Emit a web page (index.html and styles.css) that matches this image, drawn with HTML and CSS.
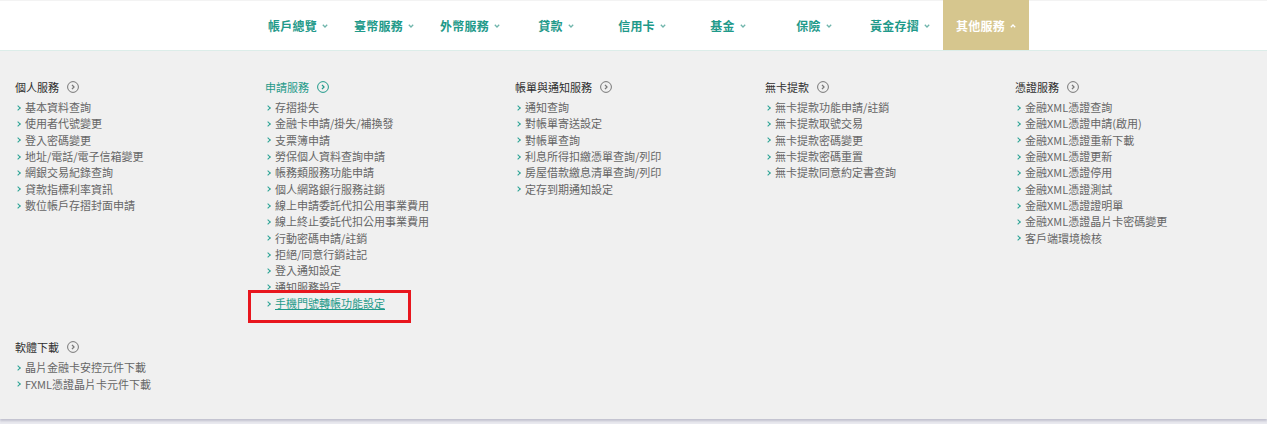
FILE: index.html
```html
<!DOCTYPE html>
<html lang="zh-Hant">
<head>
<meta charset="utf-8">
<title>其他服務</title>
<link rel="stylesheet" href="styles.css">
</head>
<body>
<header class="nav">
  <ul class="nav-list">
    <li class="nav-item">帳戶總覽<svg class="caret" viewBox="0 0 6 4"><polyline points="0.8,0.8 3,3 5.2,0.8"/></svg></li>
    <li class="nav-item">臺幣服務<svg class="caret" viewBox="0 0 6 4"><polyline points="0.8,0.8 3,3 5.2,0.8"/></svg></li>
    <li class="nav-item">外幣服務<svg class="caret" viewBox="0 0 6 4"><polyline points="0.8,0.8 3,3 5.2,0.8"/></svg></li>
    <li class="nav-item">貸款<svg class="caret" viewBox="0 0 6 4"><polyline points="0.8,0.8 3,3 5.2,0.8"/></svg></li>
    <li class="nav-item">信用卡<svg class="caret" viewBox="0 0 6 4"><polyline points="0.8,0.8 3,3 5.2,0.8"/></svg></li>
    <li class="nav-item">基金<svg class="caret" viewBox="0 0 6 4"><polyline points="0.8,0.8 3,3 5.2,0.8"/></svg></li>
    <li class="nav-item">保險<svg class="caret" viewBox="0 0 6 4"><polyline points="0.8,0.8 3,3 5.2,0.8"/></svg></li>
    <li class="nav-item">黃金存摺<svg class="caret" viewBox="0 0 6 4"><polyline points="0.8,0.8 3,3 5.2,0.8"/></svg></li>
    <li class="nav-item active">其他服務<svg class="caret" viewBox="0 0 6 4"><polyline points="0.8,3.2 3,1 5.2,3.2"/></svg></li>
  </ul>
</header>

<section class="panel">
  <div class="row">
    <div class="col">
      <h3 class="col-title">個人服務<svg class="go" viewBox="0 0 12 12"><circle cx="6" cy="6" r="5.4"/><polyline points="5,3.9 7,6 5,8.1"/></svg></h3>
      <ul class="links">
        <li>基本資料查詢</li>
        <li>使用者代號變更</li>
        <li>登入密碼變更</li>
        <li>地址/電話/電子信箱變更</li>
        <li>網銀交易紀錄查詢</li>
        <li>貸款指標利率資訊</li>
        <li>數位帳戶存摺封面申請</li>
      </ul>
    </div>
    <div class="col">
      <h3 class="col-title on">申請服務<svg class="go" viewBox="0 0 12 12"><circle cx="6" cy="6" r="5.4"/><polyline points="5,3.9 7,6 5,8.1"/></svg></h3>
      <ul class="links">
        <li>存摺掛失</li>
        <li>金融卡申請/掛失/補換發</li>
        <li>支票簿申請</li>
        <li>勞保個人資料查詢申請</li>
        <li>帳務類服務功能申請</li>
        <li>個人網路銀行服務註銷</li>
        <li>線上申請委託代扣公用事業費用</li>
        <li>線上終止委託代扣公用事業費用</li>
        <li>行動密碼申請/註銷</li>
        <li>拒絕/同意行銷註記</li>
        <li>登入通知設定</li>
        <li>通知服務設定</li>
        <li class="hot">手機門號轉帳功能設定<span class="mark"></span></li>
      </ul>
    </div>
    <div class="col">
      <h3 class="col-title">帳單與通知服務<svg class="go" viewBox="0 0 12 12"><circle cx="6" cy="6" r="5.4"/><polyline points="5,3.9 7,6 5,8.1"/></svg></h3>
      <ul class="links">
        <li>通知查詢</li>
        <li>對帳單寄送設定</li>
        <li>對帳單查詢</li>
        <li>利息所得扣繳憑單查詢/列印</li>
        <li>房屋借款繳息清單查詢/列印</li>
        <li>定存到期通知設定</li>
      </ul>
    </div>
    <div class="col">
      <h3 class="col-title">無卡提款<svg class="go" viewBox="0 0 12 12"><circle cx="6" cy="6" r="5.4"/><polyline points="5,3.9 7,6 5,8.1"/></svg></h3>
      <ul class="links">
        <li>無卡提款功能申請/註銷</li>
        <li>無卡提款取號交易</li>
        <li>無卡提款密碼變更</li>
        <li>無卡提款密碼重置</li>
        <li>無卡提款同意約定書查詢</li>
      </ul>
    </div>
    <div class="col">
      <h3 class="col-title">憑證服務<svg class="go" viewBox="0 0 12 12"><circle cx="6" cy="6" r="5.4"/><polyline points="5,3.9 7,6 5,8.1"/></svg></h3>
      <ul class="links">
        <li>金融XML憑證查詢</li>
        <li>金融XML憑證申請(啟用)</li>
        <li>金融XML憑證重新下載</li>
        <li>金融XML憑證更新</li>
        <li>金融XML憑證停用</li>
        <li>金融XML憑證測試</li>
        <li>金融XML憑證證明單</li>
        <li>金融XML憑證晶片卡密碼變更</li>
        <li>客戶端環境檢核</li>
      </ul>
    </div>
  </div>
  <div class="row">
    <div class="col">
      <h3 class="col-title">軟體下載<svg class="go" viewBox="0 0 12 12"><circle cx="6" cy="6" r="5.4"/><polyline points="5,3.9 7,6 5,8.1"/></svg></h3>
      <ul class="links">
        <li>晶片金融卡安控元件下載</li>
        <li>FXML憑證晶片卡元件下載</li>
      </ul>
    </div>
  </div>
</section>
<div class="below"></div>
</body>
</html>
```

FILE: styles.css
```css
html, body {
  margin: 0;
  padding: 0;
}
body {
  background: #e9e9ef;
  font-family: "Noto Sans CJK TC", "Noto Sans", sans-serif;
  overflow: hidden;
}
ul {
  list-style: none;
  margin: 0;
  padding: 0;
}
h3 {
  margin: 0;
}

/* top navigation */
.nav {
  background: #ffffff;
  border-top: 1px solid #f3f3f3;
  border-bottom: 1px solid #dcede9;
  height: 49px;
}
.nav-list {
  display: flex;
  height: 49px;
  padding-left: 255px;
}
.nav-item {
  width: 86px;
  height: 50px;
  margin-top: -1px;
  display: flex;
  align-items: center;
  justify-content: center;
  gap: 5px;
  font-size: 12px;
  font-weight: 700;
  color: #1f9a8a;
  letter-spacing: 0.2px;
}
.caret {
  width: 6px;
  height: 4px;
  fill: none;
  stroke: #6fb5ab;
  stroke-width: 1.3;
  margin-top: 1px;
}
.nav-item.active {
  background: #d6c68e;
  color: #ffffff;
}
.nav-item.active .caret {
  stroke: #ffffff;
}

/* mega menu panel */
.panel {
  background: #f0f0f0;
  padding: 28px 0 27px 15px;
  box-shadow: 0 2px 2px rgba(120, 120, 150, 0.35);
  position: relative;
}
.row {
  display: flex;
}
.row + .row {
  margin-top: 28px;
}
.col {
  width: 250px;
  flex: none;
}
.col-title {
  display: flex;
  align-items: center;
  gap: 8px;
  font-size: 11px;
  font-weight: 400;
  line-height: 16px;
  color: #2e2e2e;
  margin-bottom: 4px;
}
.go {
  width: 12px;
  height: 12px;
  fill: none;
  stroke: #777777;
  stroke-width: 1;
}
.go polyline {
  stroke-width: 1.3;
}
.col-title.on {
  color: #1f9a8a;
}
.col-title.on .go {
  stroke: #1f9a8a;
}
.links li {
  position: relative;
  font-size: 11px;
  line-height: 16.35px;
  color: #666666;
  padding-left: 10px;
}
.links li::before {
  content: "";
  position: absolute;
  left: 1px;
  top: 6.5px;
  width: 3px;
  height: 3px;
  border-top: 1.6px solid #2aa394;
  border-right: 1.6px solid #2aa394;
  transform: rotate(45deg);
}
.links li.hot {
  color: #1f9a8a;
  text-decoration: underline;
}
.mark {
  position: absolute;
  left: -17px;
  top: -5px;
  width: 157px;
  height: 27px;
  border: 3px solid #e8161e;
}

.below {
  height: 8px;
}
```
